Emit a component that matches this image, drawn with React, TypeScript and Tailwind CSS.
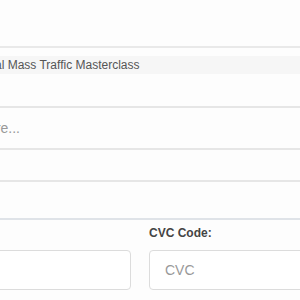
export default function App() {
  return (
    <div className="w-[300px] h-[300px] overflow-hidden bg-[#fdfdfd] font-['Liberation_Sans',Arial,sans-serif]">
      <div className="ml-[-160px] w-[520px] flex flex-col">
        <div className="h-[46px]" />
        <div className="h-[2px] bg-[#e9e9e9]" />
        <div className="mt-[8px] h-[18px] bg-[#f6f6f6] flex items-center pl-[131px] text-[12px] text-[#555]">
          Digital Mass Traffic Masterclass
        </div>
        <div className="h-[32px]" />
        <div className="h-[2px] bg-[#e6e6e6]" />
        <div className="h-[40px] flex items-center justify-end pr-[340px] text-[14px] text-[#999]">
          Enter coupon code here...
        </div>
        <div className="h-[2px] bg-[#e6e6e6]" />
        <div className="h-[30px]" />
        <div className="h-[2px] bg-[#e6e6e6]" />
        <div className="h-[36px]" />
        <div className="h-[2px] bg-[#dfe3e8]" />
        <div className="grid grid-cols-[291px_1fr] gap-[18px] pt-[2px]">
          <div className="flex flex-col">
            <div className="h-[22px] text-[12px] font-bold text-[#444] flex items-center">Expiry Date:</div>
            <div className="mt-[6px] h-[40px] border border-[#dcdcdc] rounded-[4px] bg-white" />
          </div>
          <div className="flex flex-col">
            <div className="h-[22px] text-[12px] font-bold text-[#444] flex items-center">CVC Code:</div>
            <div className="mt-[6px] h-[40px] border border-[#dcdcdc] rounded-[4px] bg-white flex items-center pl-[15px] text-[14px] text-[#999]">
              CVC
            </div>
          </div>
        </div>
      </div>
    </div>
  );
}
